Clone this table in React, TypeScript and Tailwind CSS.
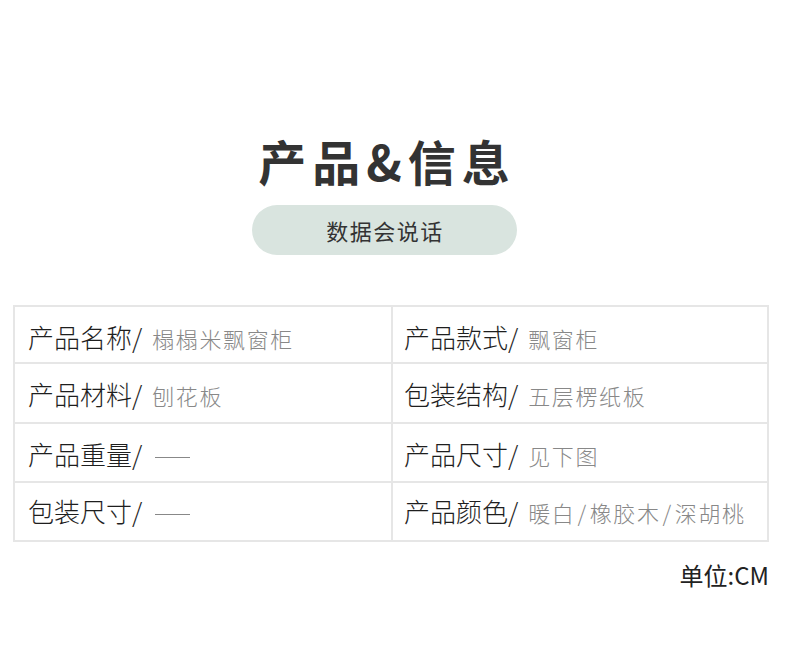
const rows: { h: string; pt: string; cells: [string, string, string, string] }[] = [
  { h: "h-[55px]", pt: "pt-[17px]", cells: ["产品名称/", "榻榻米飘窗柜", "产品款式/", "飘窗柜"] },
  { h: "h-[60px]", pt: "pt-[17px]", cells: ["产品材料/", "刨花板", "包装结构/", "五层楞纸板"] },
  { h: "h-[59px]", pt: "pt-[17px]", cells: ["产品重量/", "", "产品尺寸/", "见下图"] },
  { h: "h-[59px]", pt: "pt-[15px]", cells: ["包装尺寸/", "", "产品颜色/", "暖白/橡胶木/深胡桃"] },
];

const font = { fontFamily: '"Noto Sans CJK SC", "Noto Sans", sans-serif' };

const Value = ({ text }: { text: string }) => {
  const parts = text.split("/");
  return (
    <span className="ml-[10px] text-[22px] font-light leading-none tracking-[1.6px] text-[#888]">
      {parts.map((p, i) => (
        <span key={i}>
          {i > 0 && <span className="mx-[2px]">/</span>}
          {p}
        </span>
      ))}
    </span>
  );
};

const Cell = ({ label, value }: { label: string; value: string }) => (
  <div className="flex items-baseline">
    <span className="text-[26px] font-light leading-none text-[#1e1e1e]">{label}</span>
    {value ? (
      <Value text={value} />
    ) : (
      <span className="ml-[13px] inline-block h-px w-[35px] -translate-y-[7px] bg-[#888]" />
    )}
  </div>
);

const App = () => {
  return (
    <div className="min-h-[647px] w-[790px] bg-white" style={font}>
      <div className="flex w-[768px] flex-col items-center pt-[136px]">
        <h1 className="pl-[6px] text-[48px] font-bold leading-[48px] tracking-[6px] text-[#333]">产品&amp;信息</h1>
        <div className="mt-[21px] flex h-[50px] w-[265px] items-center justify-center rounded-full bg-[#d9e4df]">
          <span className="pl-[2px] text-[22px] font-normal tracking-[1.5px] text-[#333]">数据会说话</span>
        </div>
      </div>

      <div className="ml-[13px] mt-[50px] w-[756px] border-2 border-[#e6e6e6]">
        {rows.map((r, i) => (
          <div key={i} className={`flex ${r.h} ${i > 0 ? "border-t-2 border-[#e6e6e6]" : ""}`}>
            <div className={`w-[378px] border-r-2 border-[#e6e6e6] pl-[13px] ${r.pt}`}>
              <Cell label={r.cells[0]} value={r.cells[1]} />
            </div>
            <div className={`flex-1 pl-[11px] ${r.pt}`}>
              <Cell label={r.cells[2]} value={r.cells[3]} />
            </div>
          </div>
        ))}
      </div>

      <div className="mt-[21px] flex w-[769px] justify-end">
        <span className="text-[24px] font-normal leading-none text-[#222]">单位:CM</span>
      </div>
    </div>
  );
};

export default App;
